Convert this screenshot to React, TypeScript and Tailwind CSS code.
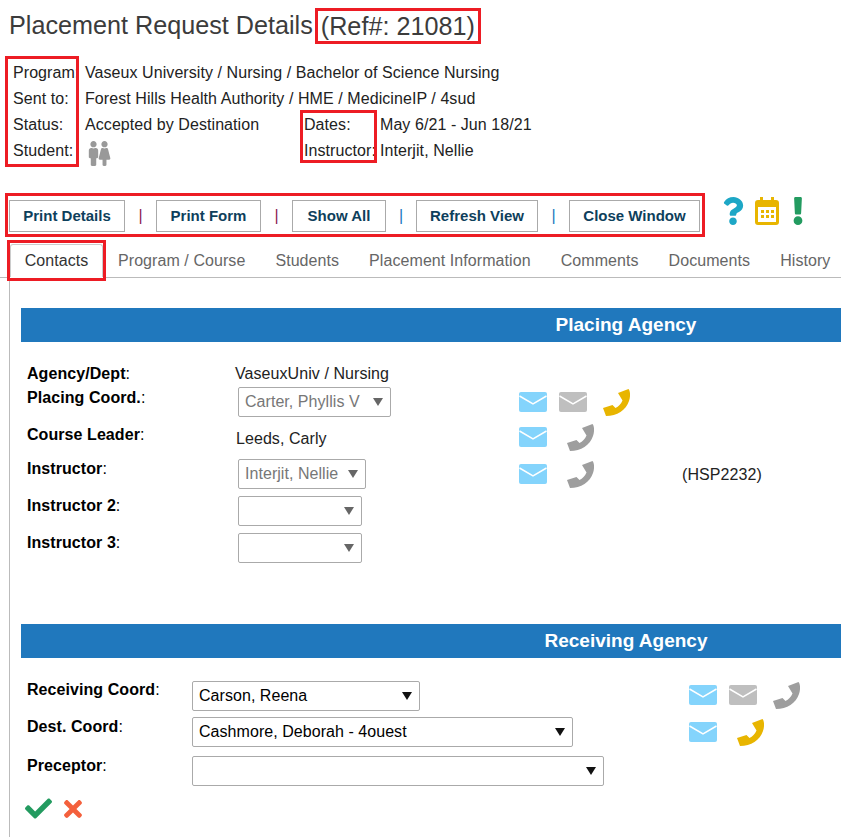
import { FaCheck, FaExclamation, FaFemale, FaMale, FaQuestion, FaTimes } from "react-icons/fa";

const tabs = ["Program / Course", "Students", "Placement Information", "Comments", "Documents", "History"];

function Mail({ grey }: { grey?: boolean }) {
  return (
    <svg width="28" height="20" viewBox="0 0 28 20" className="shrink-0">
      <rect width="28" height="20" rx="2" fill={grey ? "#bfbfbf" : "#84d4fc"} />
      <path d="M0.5 4 L14 12 L27.5 4" fill="none" stroke="#fff" strokeWidth="1.5" />
    </svg>
  );
}

function Phone({ on, className }: { on?: boolean; className?: string }) {
  return (
    <svg width="27" height="27" viewBox="0 0 27 27" className={`shrink-0 ${className ?? ""}`}>
      <path
        d="M15 4 L25.5 0 C27.5 2 27.5 8 26 12 C23 21 14 27 3 27 L0 19 L9.5 16 L12.5 19 C15.5 17.5 18 15 19.5 11.5 Z"
        fill={on ? "#e8b500" : "#9e9e9e"}
      />
    </svg>
  );
}

function Picker({ value, width, disabled }: { value?: string; width: string; disabled?: boolean }) {
  return (
    <div className={`flex h-[30px] items-center justify-between rounded-[2px] border border-[#aaa] bg-white pl-[6px] pr-[7px] ${width} ${disabled ? "text-[#777]" : "text-black"}`}>
      <span className="tracking-[0.05px]">{value}</span>
      <svg width="10" height="8" viewBox="0 0 10 8">
        <path d="M0 0 H10 L5 8 Z" fill={disabled ? "#666" : "#111"} />
      </svg>
    </div>
  );
}

function Label({ text, className }: { text: string; className?: string }) {
  return (
    <span className={`block text-black ${className ?? ""}`}>
      <b>{text}</b>:
    </span>
  );
}

function Bar({ title, className }: { title: string; className?: string }) {
  return (
    <div className={`flex h-[34px] items-center justify-center bg-[#2078bd] pl-[390px] text-[19px] font-bold tracking-normal text-white ${className ?? ""}`}>
      <span className="w-[210px] text-center">{title}</span>
    </div>
  );
}

function ToolButton({ text, width }: { text: string; width: string }) {
  return (
    <div className={`flex h-[32px] items-center justify-center border border-[#aaa] text-[15px] font-bold tracking-normal text-[#0e3f5c] ${width}`}>
      {text}
    </div>
  );
}

function Sep({ color, width }: { color: string; width: string }) {
  return <span className={`text-center ${color} ${width}`}>|</span>;
}

export default function App() {
  return (
    <div className="relative h-[837px] w-[841px] overflow-hidden bg-white font-['Liberation_Sans',Arial,sans-serif] text-[16px] tracking-[0.07px] text-[#222]">
      <div className="flex h-[52px] items-start pl-[9px] pt-[8px] text-[25.2px] leading-[34px] tracking-normal text-[#3c3c3c]">
        <span>Placement Request Details</span>
        <span className="ml-[2px] flex h-[36px] w-[166px] items-center justify-center border-[3px] border-[#ed1c24]">(Ref#: 21081)</span>
      </div>

      <div className="relative ml-[13px] mt-[8px] grid h-[104px] grid-cols-[72px_219px_76px_1fr] grid-rows-[26px_26px_26px_26px] items-center">
        <span>Program:</span>
        <span className="col-span-3">Vaseux University / Nursing / Bachelor of Science Nursing</span>
        <span>Sent to:</span>
        <span className="col-span-3">Forest Hills Health Authority / HME / MedicineIP / 4sud</span>
        <span>Status:</span>
        <span>Accepted by Destination</span>
        <span>Dates:</span>
        <span>May 6/21 - Jun 18/21</span>
        <span>Student:</span>
        <span className="ml-[3px] mt-[5px] flex text-[#999]">
          <FaMale size={25} className="-mx-[7px]" />
          <FaFemale size={25} className="-mx-[7px]" />
        </span>
        <span>Instructor:</span>
        <span>Interjit, Nellie</span>
        <div className="absolute left-[-8px] top-[-4px] h-[111px] w-[74px] border-[3px] border-[#ed1c24]" />
        <div className="absolute left-[287px] top-[50px] h-[53px] w-[77px] border-[3px] border-[#ed1c24]" />
      </div>

      <div className="mt-[29px] flex items-center pl-[5px]">
        <div className="flex h-[44px] w-[700px] items-center border-[3px] border-[#ed1c24] pl-[1px] pt-[2px]">
          <ToolButton text="Print Details" width="w-[116px]" />
          <Sep color="text-[#8b1a4f]" width="w-[31px]" />
          <ToolButton text="Print Form" width="w-[105px]" />
          <Sep color="text-[#8b1a4f]" width="w-[31px]" />
          <ToolButton text="Show All" width="w-[94px]" />
          <Sep color="text-[#2078bd]" width="w-[30px]" />
          <ToolButton text="Refresh View" width="w-[122px]" />
          <Sep color="text-[#2078bd]" width="w-[31px]" />
          <ToolButton text="Close Window" width="w-[131px]" />
        </div>
        <div className="-mt-[9px] ml-[14px] flex items-center">
          <FaQuestion size={28} className="text-[#1da7c6]" />
          <svg width="26" height="30" viewBox="0 0 26 30" className="ml-[7px]">
            <path d="M6 1 h3 v3 h8 v-3 h3 v3 h2 a3 3 0 0 1 3 3 v19 a3 3 0 0 1 -3 3 h-18 a3 3 0 0 1 -3 -3 v-19 a3 3 0 0 1 3 -3 h2 z M4 11 v15 h18 v-15 z" fill="#e8b500" fillRule="evenodd" />
            <path d="M7 14 h3 v3 h-3 z M12 14 h3 v3 h-3 z M17 14 h3 v3 h-3 z M7 19 h3 v3 h-3 z M12 19 h3 v3 h-3 z M17 19 h3 v3 h-3 z" fill="#e8b500" />
          </svg>
          <FaExclamation size={28} className="ml-[4px] text-[#239b60]" />
        </div>
      </div>

      <div className="relative mt-[4px] flex h-[37px] border-b border-[#bbb] text-[#666]">
        <div className="absolute -top-[1px] left-[7px] z-10 h-[41px] w-[99px] border-[3px] border-[#ed1c24] bg-white">
          <div className="mt-[1px] flex h-[33px] items-center justify-center rounded-t-[3px] border border-b-0 border-[#ccc] text-[#333]">
            Contacts
          </div>
        </div>
        <div className="ml-[118px] flex h-full items-center gap-[30px] pb-[1px] pt-[5px]">
          {tabs.map((tab) => (
            <span key={tab}>{tab}</span>
          ))}
        </div>
      </div>

      <div className="ml-[9px] h-[600px] border-l border-[#bbb] pl-[11px] pt-[30px]">
        <Bar title="Placing Agency" />

        <div className="mt-[22px] flex h-[20px] items-center pl-[6px]">
          <div className="w-[208px]"><Label text="Agency/Dept" /></div>
          <span>VaseuxUniv / Nursing</span>
        </div>
        <div className="mt-[3px] flex h-[30px] pl-[6px]">
          <div className="w-[211px]"><Label text="Placing Coord." className="-mt-[1px]" /></div>
          <Picker value="Carter, Phyllis V" width="w-[153px]" disabled />
          <div className="ml-[128px] flex items-center">
            <Mail />
            <div className="ml-[12px]"><Mail grey /></div>
            <Phone on className="ml-[16px]" />
          </div>
        </div>
        <div className="mt-[7px] flex h-[30px] items-center pl-[6px]">
          <div className="-mt-[8px] w-[209px]"><Label text="Course Leader" /></div>
          <span className="w-[283px]">Leeds, Carly</span>
          <div className="-mt-[4px] flex items-center">
            <Mail />
            <Phone className="ml-[20px]" />
          </div>
        </div>
        <div className="mt-[5px] flex h-[30px] pl-[6px]">
          <div className="w-[211px]"><Label text="Instructor" className="-mt-[2px]" /></div>
          <Picker value="Interjit, Nellie" width="w-[128px]" disabled />
          <div className="ml-[153px] flex items-center">
            <Mail />
            <Phone className="ml-[20px]" />
            <span className="ml-[88px] mt-[1px]">(HSP2232)</span>
          </div>
        </div>
        <div className="mt-[7px] flex h-[30px] pl-[6px]">
          <div className="w-[211px]"><Label text="Instructor 2" className="-mt-[2px]" /></div>
          <Picker width="w-[124px]" disabled />
        </div>
        <div className="mt-[7px] flex h-[30px] pl-[6px]">
          <div className="w-[211px]"><Label text="Instructor 3" className="-mt-[2px]" /></div>
          <Picker width="w-[124px]" disabled />
        </div>

        <Bar title="Receiving Agency" className="mt-[61px]" />

        <div className="mt-[23px] flex h-[30px] pl-[6px]">
          <div className="w-[165px]"><Label text="Receiving Coord" className="-mt-[3px]" /></div>
          <Picker value="Carson, Reena" width="w-[228px]" />
          <div className="-mt-[2px] ml-[269px] flex items-center">
            <Mail />
            <div className="ml-[12px]"><Mail grey /></div>
            <Phone className="ml-[16px]" />
          </div>
        </div>
        <div className="mt-[6px] flex h-[30px] pl-[6px]">
          <div className="w-[165px]"><Label text="Dest. Coord" className="-mt-[2px]" /></div>
          <Picker value="Cashmore, Deborah - 4ouest" width="w-[381px]" />
          <div className="ml-[116px] flex items-center">
            <Mail />
            <Phone on className="ml-[20px]" />
          </div>
        </div>
        <div className="mt-[9px] flex h-[30px] pl-[6px]">
          <div className="w-[165px]"><Label text="Preceptor" className="-mt-[2px]" /></div>
          <Picker width="w-[412px]" />
        </div>
        <div className="mt-[9px] flex items-center pl-[4px]">
          <FaCheck size={27} className="text-[#239b60]" />
          <FaTimes size={26} className="ml-[8px] text-[#f4603c]" />
        </div>
      </div>
    </div>
  );
}
